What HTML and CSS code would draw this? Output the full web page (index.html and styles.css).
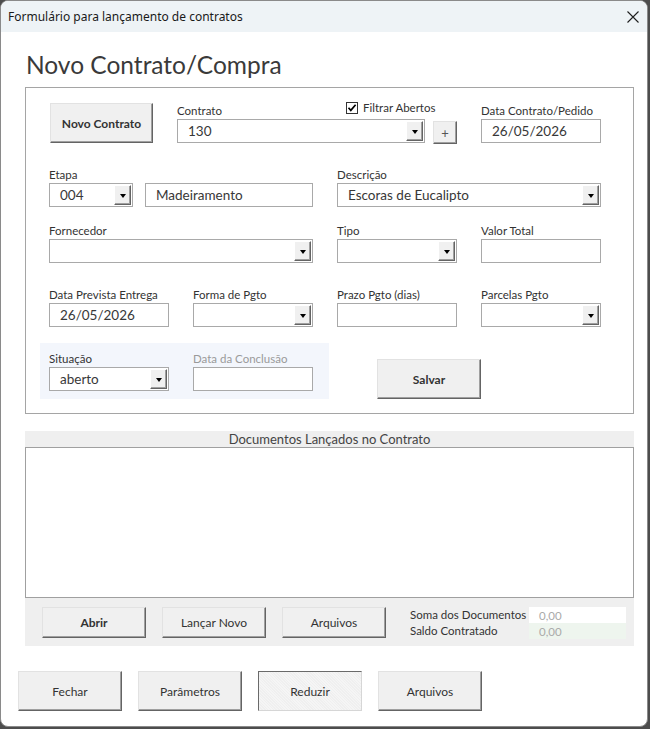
FILE: index.html
```html
<!DOCTYPE html>
<html lang="pt-BR">
<head>
    <meta charset="UTF-8">
    <meta name="viewport" content="width=device-width, initial-scale=1.0">
    <title>Formulário para lançamento de contratos</title>
    <link rel="stylesheet" href="styles.css">
</head>
<body>
    <div class="window">
        <div class="titlebar">
            <span class="title">Formulário para lançamento de contratos</span>
            <svg class="close" width="12" height="12" viewBox="0 0 12 12">
                <path d="M0.5 0.5L11.5 11.5M11.5 0.5L0.5 11.5" stroke="#1f1f1f" stroke-width="1.1" fill="none"/>
            </svg>
        </div>

        <div class="content">
            <h1 class="form-title">Novo Contrato/Compra</h1>

            <section class="frame">
                <!-- linha do contrato -->
                <div class="row-top">
                    <button class="btn btn-bold btn-new">Novo Contrato</button>
                    <div class="field contrato">
                        <div class="label-line">
                            <span class="label">Contrato</span>
                            <span class="check">
                                <svg width="12" height="12" viewBox="0 0 12 12">
                                    <rect x="0.5" y="0.5" width="11" height="11" fill="#fff" stroke="#333"/>
                                    <path d="M2.5 5.8L4.8 8.4L9.6 2.8" stroke="#000" stroke-width="1.7" fill="none"/>
                                </svg>
                                Filtrar Abertos
                            </span>
                        </div>
                        <div class="combo-line">
                            <div class="combo combo-contrato"><span class="value">130</span><span class="drop"></span></div>
                            <button class="btn btn-plus">+</button>
                        </div>
                    </div>
                    <div class="field">
                        <span class="label">Data Contrato/Pedido</span>
                        <div class="input"><span class="value">26/05/2026</span></div>
                    </div>
                </div>

                <div class="grid row-2">
                    <div class="field span-2">
                        <span class="label">Etapa</span>
                        <div class="etapa">
                            <div class="combo combo-etapa"><span class="value">004</span><span class="drop"></span></div>
                            <div class="input input-etapa"><span class="value">Madeiramento</span></div>
                        </div>
                    </div>
                    <div class="field span-2">
                        <span class="label">Descrição</span>
                        <div class="combo"><span class="value">Escoras de Eucalipto</span><span class="drop"></span></div>
                    </div>
                </div>

                <div class="grid row-3">
                    <div class="field span-2">
                        <span class="label">Fornecedor</span>
                        <div class="combo"><span class="value"></span><span class="drop"></span></div>
                    </div>
                    <div class="field">
                        <span class="label">Tipo</span>
                        <div class="combo"><span class="value"></span><span class="drop"></span></div>
                    </div>
                    <div class="field">
                        <span class="label">Valor Total</span>
                        <div class="input"><span class="value"></span></div>
                    </div>
                </div>

                <div class="grid row-4">
                    <div class="field">
                        <span class="label">Data Prevista Entrega</span>
                        <div class="input"><span class="value">26/05/2026</span></div>
                    </div>
                    <div class="field">
                        <span class="label">Forma de Pgto</span>
                        <div class="combo"><span class="value"></span><span class="drop"></span></div>
                    </div>
                    <div class="field">
                        <span class="label">Prazo Pgto (dias)</span>
                        <div class="input"><span class="value"></span></div>
                    </div>
                    <div class="field">
                        <span class="label">Parcelas Pgto</span>
                        <div class="combo"><span class="value"></span><span class="drop"></span></div>
                    </div>
                </div>

                <div class="row-5">
                    <div class="status-panel">
                        <div class="field">
                            <span class="label">Situação</span>
                            <div class="combo"><span class="value">aberto</span><span class="drop"></span></div>
                        </div>
                        <div class="field">
                            <span class="label disabled">Data da Conclusão</span>
                            <div class="input"><span class="value"></span></div>
                        </div>
                    </div>
                    <button class="btn btn-bold btn-save">Salvar</button>
                </div>
            </section>

            <section class="docs">
                <div class="docs-header">Documentos Lançados no Contrato</div>
                <div class="docs-list"></div>
                <div class="docs-toolbar">
                    <button class="btn btn-bold btn-doc">Abrir</button>
                    <button class="btn btn-doc">Lançar Novo</button>
                    <button class="btn btn-doc">Arquivos</button>
                    <div class="totals">
                        <span class="total-label">Soma dos Documentos</span>
                        <span class="total-value">0,00</span>
                        <span class="total-label">Saldo Contratado</span>
                        <span class="total-value saldo">0,00</span>
                    </div>
                </div>
            </section>

            <div class="footer-buttons">
                <button class="btn btn-foot">Fechar</button>
                <button class="btn btn-foot">Parâmetros</button>
                <button class="btn btn-foot btn-pressed">Reduzir</button>
                <button class="btn btn-foot">Arquivos</button>
            </div>
        </div>
    </div>
</body>
</html>
```

FILE: styles.css
```css
:root {
    --face: #f0f0f0;
    --edge-light: #e2e2e2;
    --edge-dark: #646464;
    --field-border: #a9a9a9;
    --text: #333333;
}

* {
    box-sizing: border-box;
}

body {
    margin: 0;
    background-color: #4d4d4d;
    font-family: 'Lato', 'Open Sans', sans-serif;
    color: var(--text);
}

.window {
    width: 648px;
    height: 727px;
    background-color: white;
    border: 1px solid #8a8a8a;
    border-radius: 8px;
    overflow: hidden;
}

.titlebar {
    height: 31px;
    background-color: #eef3f6;
    display: flex;
    align-items: center;
    justify-content: space-between;
    padding: 0 8px 0 7px;
}

.title {
    font-family: 'Noto Sans', sans-serif;
    font-size: 12px;
    color: #1a1a1a;
}

.form-title {
    margin: 18px 0 7px 25px;
    font-size: 24.5px;
    font-weight: normal;
    line-height: 30px;
    color: #3a3a3a;
}

/* moldura principal */
.frame {
    width: 609px;
    margin-left: 24px;
    border: 1px solid #a5a5a5;
    padding: 15px 0 14px 23px;
}

.field {
    display: flex;
    flex-direction: column;
}

.label {
    height: 16px;
    font-size: 11.5px;
    line-height: 16px;
    color: var(--text);
}

.label.disabled {
    color: #9a9a9a;
}

.input,
.combo {
    height: 24px;
    border: 1px solid var(--field-border);
    background-color: white;
    display: flex;
    align-items: center;
}

.value {
    flex: 1;
    padding-left: 10px;
    font-size: 13.5px;
    color: #383838;
    white-space: nowrap;
    overflow: hidden;
}

.drop {
    width: 17px;
    height: 20px;
    margin-right: 1px;
    background-color: var(--face);
    border: 1px solid;
    border-color: #fff var(--edge-dark) var(--edge-dark) #fff;
    box-shadow: inset -1px -1px 0 #a0a0a0;
    display: flex;
    align-items: center;
    justify-content: center;
}

.drop::after {
    content: '';
    border-left: 3.5px solid transparent;
    border-right: 3.5px solid transparent;
    border-top: 4px solid #000;
    margin-top: 1px;
}

.btn {
    font-family: 'Lato', 'Open Sans', sans-serif;
    font-size: 12px;
    color: var(--text);
    background-color: var(--face);
    border: 1px solid;
    border-color: var(--edge-light) var(--edge-dark) var(--edge-dark) var(--edge-light);
    box-shadow: inset -1px -1px 0 #a0a0a0;
    padding: 0;
    cursor: pointer;
}

.btn-bold {
    font-weight: bold;
}

.row-top {
    display: flex;
    align-items: flex-start;
}

.btn-new {
    width: 103px;
    height: 40px;
    margin-left: 1px;
    margin-right: 24px;
}

.contrato {
    width: 280px;
    margin-right: 24px;
}

.label-line {
    display: grid;
    grid-template-columns: 169px auto;
    height: 16px;
}

.check {
    display: flex;
    align-items: center;
    gap: 5px;
    font-size: 11.5px;
    line-height: 14px;
    margin-top: -2px;
    height: 14px;
}

.combo-line {
    display: flex;
    gap: 8px;
    align-items: flex-end;
}

.combo-contrato {
    width: 248px;
}

.btn-plus {
    width: 24px;
    height: 23px;
    margin-bottom: -1px;
    font-size: 13px;
    color: #555;
}

.row-top > .field:last-child {
    width: 120px;
}

.grid {
    display: grid;
    grid-template-columns: repeat(4, 120px);
    column-gap: 24px;
}

.span-2 {
    grid-column: span 2;
}

.row-2 {
    margin-top: 24px;
}

.row-3 {
    margin-top: 16px;
}

.row-4 {
    margin-top: 24px;
}

.etapa {
    display: flex;
    gap: 12px;
}

.combo-etapa {
    width: 84px;
}

.input-etapa {
    flex: 1;
}

.row-5 {
    display: flex;
    align-items: flex-start;
    margin-top: 16px;
}

.status-panel {
    display: flex;
    gap: 24px;
    margin-left: -9px;
    padding: 8px 16px 8px 9px;
    background-color: #f3f6fc;
}

.status-panel .field {
    width: 120px;
}

.btn-save {
    width: 104px;
    height: 40px;
    margin: 16px 0 0 48px;
}

/* documentos */
.docs {
    width: 609px;
    margin: 17px 0 0 24px;
}

.docs-header {
    height: 16px;
    line-height: 16px;
    background-color: #efefef;
    text-align: center;
    font-size: 13px;
    color: #444;
}

.docs-list {
    height: 151px;
    background-color: white;
    border: 1px solid #a0a0a0;
}

.docs-toolbar {
    height: 48px;
    background-color: #efefef;
    display: flex;
    align-items: flex-start;
    gap: 16px;
    padding: 9px 0 0 17px;
}

.btn-doc {
    width: 104px;
    height: 31px;
}

.totals {
    display: grid;
    grid-template-columns: 119px 97px;
    margin-left: 8px;
    font-size: 11.5px;
}

.total-label {
    height: 16px;
    line-height: 15px;
}

.total-value {
    height: 16px;
    line-height: 17px;
    padding-left: 10px;
    background-color: white;
    color: #aaa;
}

.total-value.saldo {
    background-color: #eef5ee;
}

.footer-buttons {
    display: flex;
    gap: 16px;
    margin: 25px 0 0 17px;
}

.btn-foot {
    width: 104px;
    height: 40px;
}

.btn-pressed {
    border-color: #6a6a6a #d6d6d6 #d6d6d6 #6a6a6a;
    box-shadow: none;
    background-color: #f5f5f5;
    background-image: repeating-linear-gradient(45deg, rgba(0,0,0,0.025) 0 1px, transparent 1px 2px);
}
```
